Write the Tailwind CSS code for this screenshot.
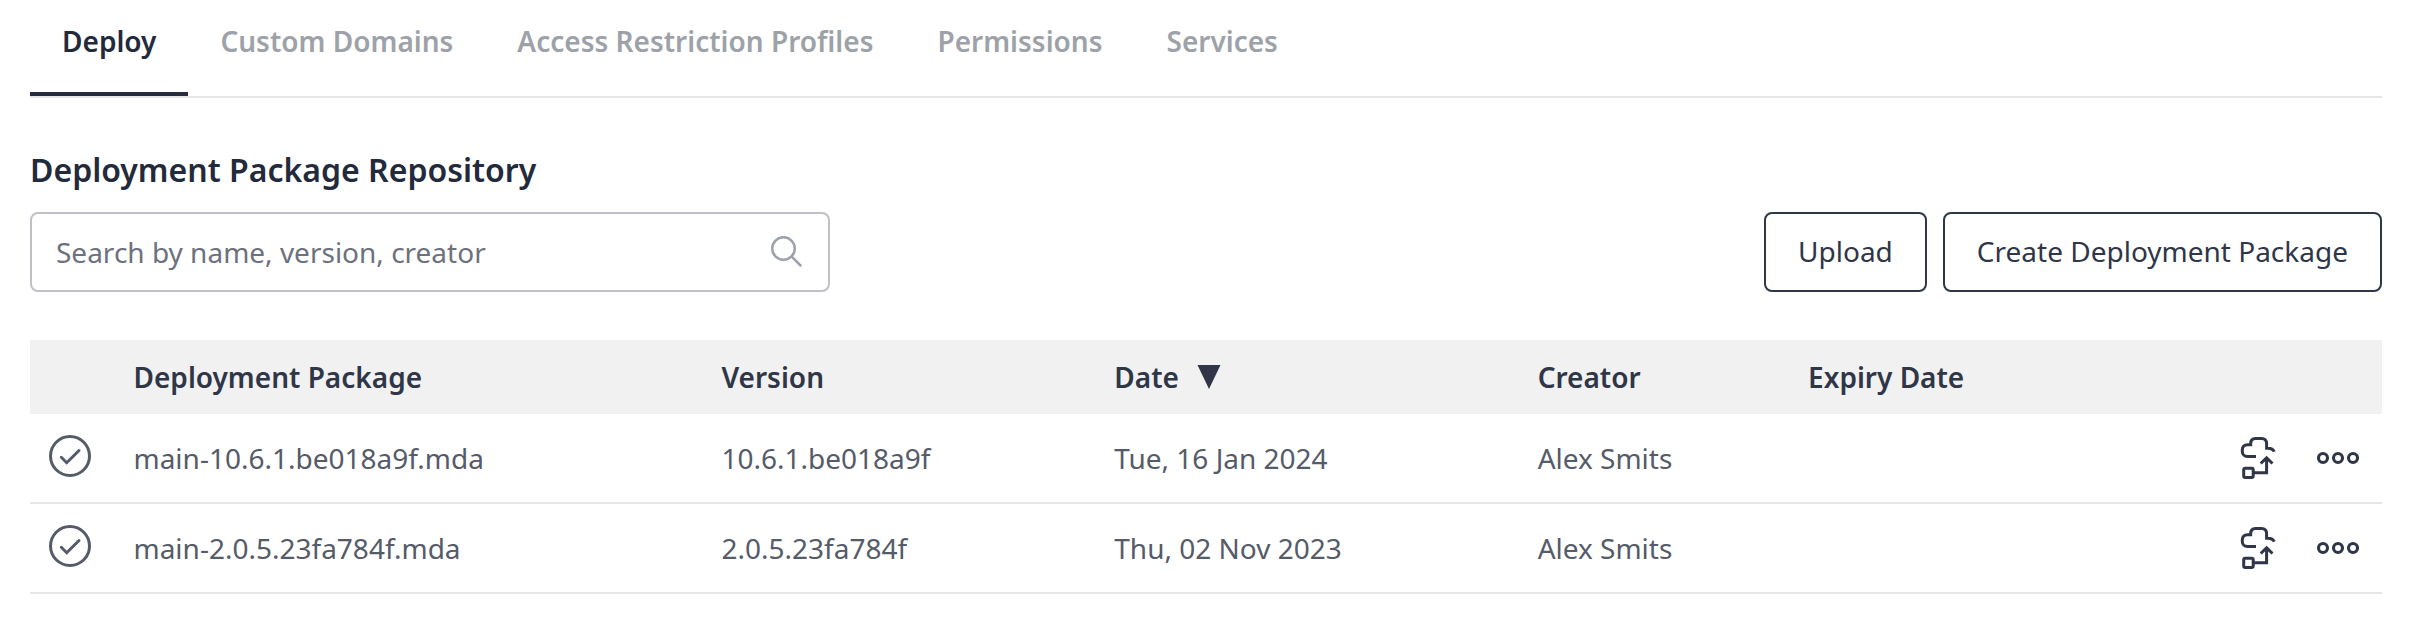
<!DOCTYPE html>
<html lang="en">
<head>
<meta charset="utf-8">
<meta name="viewport" content="width=device-width, initial-scale=1">
<title>Deployment Package Repository</title>
<script src="https://cdn.jsdelivr.net/npm/@tailwindcss/browser@4"></script>
</head>
<body class="bg-white px-[30px] pb-[30px] font-['Noto_Sans',sans-serif] text-[28px] leading-[38px] text-[#555b69]">
<svg class="hidden" aria-hidden="true">
  <symbol id="check" viewBox="0 0 42 42"><circle cx="21" cy="21" r="19.5" fill="none" stroke="currentColor" stroke-width="3"/><path d="M12.3 22.3l5.4 5.4L30 15.5" fill="none" stroke="currentColor" stroke-width="3" stroke-linecap="round"/></symbol>
  <symbol id="deploy" viewBox="0 0 42 42"><g fill="none" stroke="currentColor" stroke-width="3"><path d="M19 19.5H10.500C7.300 19.500 5.300 17.300 5.300 14.500V12.700C5.300 9.700 7.300 7.700 10.500 7.700H13.700V6.500C13.700 3.500 15.500 1.500 18.500 1.500H24.700C27.700 1.500 29.600 3.500 29.600 6.500V11.200H31C34 11.200 36.300 12.500 37.300 14.700"/><rect x="6.700" y="31.300" width="9.500" height="9.200" rx="1.500"/><path d="M16.300 35.700H29.600V21M23.700 26.500L29.600 20.800L35.500 26.500"/></g></symbol>
  <symbol id="more" viewBox="0 0 42 42"><g fill="none" stroke="currentColor" stroke-width="3.100"><circle cx="6" cy="21" r="4.500"/><circle cx="21" cy="21" r="4.500"/><circle cx="36" cy="21" r="4.500"/></g></symbol>
</svg>

<nav role="tablist" class="flex border-b-2 border-[#e6e6e6] font-semibold text-[#9da2a9]">
  <button role="tab" aria-selected="true" class="border-b-4 border-[#252c3d] px-8 pt-[22px] pb-8 text-[#222a3b]">Deploy</button>
  <button role="tab" class="border-b-4 border-transparent px-8 pt-[22px] pb-8">Custom Domains</button>
  <button role="tab" class="border-b-4 border-transparent px-8 pt-[22px] pb-8">Access Restriction Profiles</button>
  <button role="tab" class="border-b-4 border-transparent px-8 pt-[22px] pb-8">Permissions</button>
  <button role="tab" class="border-b-4 border-transparent px-8 pt-[22px] pb-8">Services</button>
</nav>

<main>
  <h1 class="mt-[50px] mb-5 text-[32px] leading-[44px] font-semibold text-[#222a3b]">Deployment Package Repository</h1>
  <div class="flex items-center justify-between gap-4">
    <label class="flex h-20 w-[800px] items-center rounded-lg border-2 border-[#c0c1c7] pr-[26px] pl-6">
      <input type="text" aria-label="Search packages" placeholder="Search by name, version, creator" class="min-w-0 flex-1 outline-none placeholder:text-[#6c717d]">
      <svg class="size-8 text-[#9da2a9]" viewBox="0 0 32 32" fill="none" stroke="currentColor" stroke-width="2.500" stroke-linecap="round"><circle cx="13.500" cy="12.500" r="11.300"/><path d="M21.700 20.700L30.500 29.500"/></svg>
    </label>
    <div class="flex gap-4 text-[#2f3647]">
      <button class="h-20 rounded-lg border-2 border-[#2f3647] px-8 pb-0.5">Upload</button>
      <button class="h-20 rounded-lg border-2 border-[#2f3647] px-8 pb-0.5">Create Deployment Package</button>
    </div>
  </div>

  <table class="mt-12 w-full table-fixed border-separate border-spacing-0 text-left">
    <colgroup><col class="w-[4.4%]"><col class="w-[25%]"><col class="w-[16.7%]"><col class="w-[18%]"><col class="w-[11.5%]"><col></colgroup>
    <thead class="bg-[#f1f1f1] text-[#2f3647]">
      <tr class="h-[74px]">
        <td></td>
        <th class="font-semibold">Deployment Package</th>
        <th class="font-semibold">Version</th>
        <th class="font-semibold" aria-sort="descending"><button class="flex items-center gap-[18px]">Date <svg class="h-6 w-6" viewBox="0 0 24 24" fill="currentColor" aria-hidden="true"><path d="M.5 0h23L12 24z"/></svg></button></th>
        <th class="font-semibold">Creator</th>
        <th class="font-semibold">Expiry Date</th>
      </tr>
    </thead>
    <tbody class="[&_td]:border-b-2 [&_td]:border-[#e6e6e6]">
      <tr class="h-[90px]">
        <td class="pb-1 pl-[19px]"><svg class="size-[42px]" role="img" aria-label="Ready"><use href="#check"/></svg></td>
        <td>main-10.6.1.be018a9f.mda</td>
        <td>10.6.1.be018a9f</td>
        <td>Tue, 16 Jan 2024</td>
        <td>Alex Smits</td>
        <td><div class="flex justify-end gap-[38px] pr-[23px] text-[#2f3647]">
          <button aria-label="Deploy package"><svg class="size-[42px]"><use href="#deploy"/></svg></button>
          <button aria-label="More actions"><svg class="size-[42px]"><use href="#more"/></svg></button>
        </div></td>
      </tr>
      <tr class="h-[90px]">
        <td class="pb-1 pl-[19px]"><svg class="size-[42px]" role="img" aria-label="Ready"><use href="#check"/></svg></td>
        <td>main-2.0.5.23fa784f.mda</td>
        <td>2.0.5.23fa784f</td>
        <td>Thu, 02 Nov 2023</td>
        <td>Alex Smits</td>
        <td><div class="flex justify-end gap-[38px] pr-[23px] text-[#2f3647]">
          <button aria-label="Deploy package"><svg class="size-[42px]"><use href="#deploy"/></svg></button>
          <button aria-label="More actions"><svg class="size-[42px]"><use href="#more"/></svg></button>
        </div></td>
      </tr>
    </tbody>
  </table>
</main>
</body>
</html>
